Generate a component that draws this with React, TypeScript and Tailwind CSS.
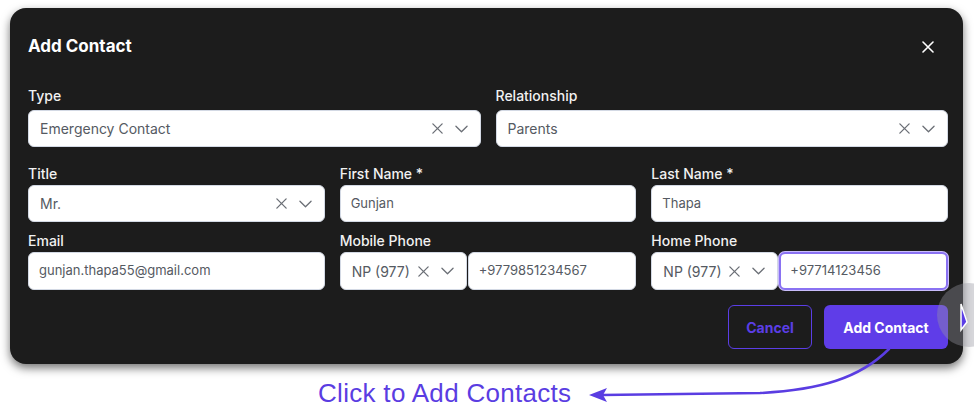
import React from 'react';

const ClearIcon = () => (
  <svg width="13" height="13" viewBox="0 0 14 14" fill="none" stroke="#6b6f76" strokeWidth="1.4" strokeLinecap="round">
    <path d="M2 2l10 10M12 2L2 12" />
  </svg>
);

const ChevronIcon = () => (
  <svg width="13" height="8" viewBox="0 0 14 8" fill="none" stroke="#6b6f76" strokeWidth="1.4" strokeLinecap="round" strokeLinejoin="round">
    <path d="M1 1l6 6 6-6" />
  </svg>
);

const Select: React.FC<{ value: string; className?: string }> = ({ value, className = '' }) => (
  <div className={`flex items-center bg-white border border-[#d3d9e4] rounded-[6px] pl-[11px] pr-[12px] ${className}`}>
    <span className="flex-1 text-[14px] text-[#555a62] truncate">{value}</span>
    <div className="flex items-center gap-[11px]">
      <ClearIcon />
      <ChevronIcon />
    </div>
  </div>
);

const TextInput: React.FC<{ value: string; className?: string }> = ({ value, className = '' }) => (
  <div className={`flex items-center bg-white border border-[#d3d9e4] rounded-[6px] px-[10px] ${className}`}>
    <span className="text-[13px] text-[#555a62] truncate">{value}</span>
  </div>
);

const Label: React.FC<{ children: React.ReactNode }> = ({ children }) => (
  <div className="h-[20px] leading-[20px] text-[14px] font-medium text-[#f1f1f1]">{children}</div>
);

export default function App() {
  return (
    <div className="relative w-[974px] h-[408px] bg-white overflow-hidden font-['Inter',sans-serif]">
      <div className="ml-[10px] mt-[8px] w-[953px] h-[356px] bg-[#1c1c1c] rounded-[16px] shadow-[0_4px_10px_rgba(0,0,0,0.55)] pl-[18px] pr-[15px] pt-[27px]">
        <div className="flex items-center justify-between h-[24px]">
          <h2 className="text-[17px] font-bold text-white">Add Contact</h2>
          <svg width="12" height="12" viewBox="0 0 12 12" className="mr-[14px]" stroke="#ffffff" strokeWidth="1.6" strokeLinecap="round">
            <path d="M1 1l10 10M11 1L1 11" />
          </svg>
        </div>

        <div className="grid grid-cols-2 gap-x-[15px] mt-[27px]">
          <div>
            <Label>Type</Label>
            <Select value="Emergency Contact" className="h-[37px] mt-[4px]" />
          </div>
          <div>
            <Label>Relationship</Label>
            <Select value="Parents" className="h-[37px] mt-[4px]" />
          </div>
        </div>

        <div className="grid grid-cols-3 gap-x-[15px] mt-[17px]">
          <div>
            <Label>Title</Label>
            <Select value="Mr." className="h-[37px] mt-[1px]" />
          </div>
          <div>
            <Label>First Name *</Label>
            <TextInput value="Gunjan" className="h-[37px] mt-[1px]" />
          </div>
          <div>
            <Label>Last Name *</Label>
            <TextInput value="Thapa" className="h-[37px] mt-[1px]" />
          </div>
        </div>

        <div className="grid grid-cols-3 gap-x-[15px] mt-[9px]">
          <div>
            <Label>Email</Label>
            <TextInput value="gunjan.thapa55@gmail.com" className="h-[38px] mt-[1px]" />
          </div>
          <div>
            <Label>Mobile Phone</Label>
            <div className="flex mt-[1px] h-[38px]">
              <Select value="NP (977)" className="w-[127px] shrink-0" />
              <TextInput value="+9779851234567" className="flex-1 ml-[1px]" />
            </div>
          </div>
          <div>
            <Label>Home Phone</Label>
            <div className="flex mt-[1px] h-[38px]">
              <Select value="NP (977)" className="w-[127px] shrink-0" />
              <div className="flex-1 flex items-center bg-white border-2 border-[#8a72f2] rounded-[6px] px-[9px] ml-[1px] shadow-[0_0_0_1px_#c9bdfa]">
                <span className="text-[13px] text-[#555a62]">+97714123456</span>
              </div>
            </div>
          </div>
        </div>

        <div className="flex justify-end gap-[12px] mt-[15px]">
          <button className="w-[84px] h-[44px] rounded-[6px] border border-[#5b3ee6] text-[#5b3ee6] text-[14px] font-bold">
            Cancel
          </button>
          <button className="w-[124px] h-[44px] rounded-[6px] bg-[#5f3de8] text-white text-[14px] font-bold">
            Add Contact
          </button>
        </div>
      </div>

      <div className="pl-[318px] mt-[14px]">
        <div className="h-[30px] font-['Liberation_Sans',Arial,sans-serif] text-[26px] leading-[30px] tracking-[0.3px] text-[#5a3de2] whitespace-nowrap">
          Click to Add Contacts
        </div>
      </div>

      {/* annotation arrow + cursor highlight */}
      <svg className="absolute inset-0 pointer-events-none" width="974" height="408" viewBox="0 0 974 408">
        <path d="M889 349 C 860 378, 820 390, 760 393 L 602 395" fill="none" stroke="#5a3de2" strokeWidth="2.5" strokeLinecap="round" />
        <path d="M589 395 L 607 388 L 603 395 L 607 402 Z" fill="#5a3de2" />
        <circle cx="969" cy="315" r="32" fill="rgba(150,150,160,0.38)" />
        <path d="M961 304 L 961 330 L 967 322 Z" fill="#5b3ee6" stroke="#ffffff" strokeWidth="1.5" />
      </svg>
    </div>
  );
}
